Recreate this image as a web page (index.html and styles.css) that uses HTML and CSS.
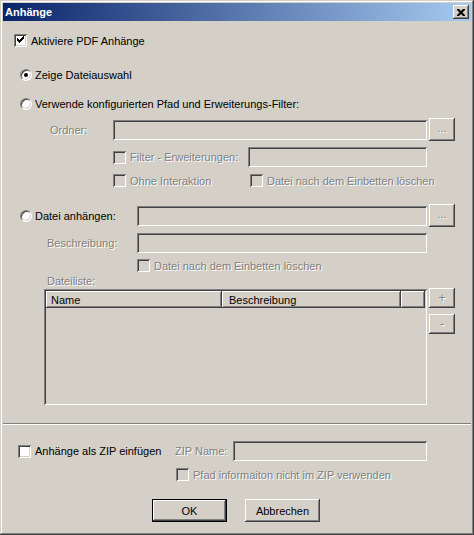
FILE: index.html
```html
<!DOCTYPE html>
<html lang="de">
<head>
  <meta charset="UTF-8">
  <title>Anhänge</title>
  <link rel="stylesheet" href="styles.css">
</head>
<body>
  <div class="window">
    <div class="titlebar">
      <span class="title">Anhänge</span>
      <span class="close">
        <svg width="8" height="7" viewBox="0 0 8 7"><path d="M0 0h2l2 2 2-2h2v1l-2.5 2.5L8 6v1H6L4 5 2 7H0V6l2.5-2.5L0 1z" fill="#000"/></svg>
      </span>
    </div>

    <div class="content">
      <div class="row r-enable">
        <span class="check on"></span>
        <span class="text">Aktiviere PDF Anhänge</span>
      </div>

      <div class="row r-radio1">
        <span class="radio on"></span>
        <span class="text">Zeige Dateiauswahl</span>
      </div>

      <div class="row r-radio2">
        <span class="radio"></span>
        <span class="text">Verwende konfigurierten Pfad und Erweiterungs-Filter:</span>
      </div>

      <div class="row r-folder">
        <span class="label off w-folder">Ordner:</span>
        <span class="field w-314"></span>
        <span class="btn small">...</span>
      </div>

      <div class="row r-filter">
        <span class="check dis"></span>
        <span class="text off w-filter">Filter - Erweiterungen:</span>
        <span class="field w-179"></span>
      </div>

      <div class="row r-noint">
        <span class="check dis"></span>
        <span class="text off w-noint">Ohne Interaktion</span>
        <span class="check dis"></span>
        <span class="text off">Datei nach dem Einbetten löschen</span>
      </div>

      <div class="row r-attach">
        <span class="radio"></span>
        <span class="text w-attach">Datei anhängen:</span>
        <span class="field w-290"></span>
        <span class="btn small">...</span>
      </div>

      <div class="row r-desc">
        <span class="label off w-desc">Beschreibung:</span>
        <span class="field w-290"></span>
      </div>

      <div class="row r-delete">
        <span class="check dis"></span>
        <span class="text off">Datei nach dem Einbetten löschen</span>
      </div>

      <div class="row r-listlabel">
        <span class="label off">Dateiliste:</span>
      </div>

      <div class="row r-list">
        <div class="listbox">
          <div class="header">
            <span class="col c-name">Name</span>
            <span class="col c-desc">Beschreibung</span>
            <span class="col c-rest"></span>
          </div>
        </div>
        <div class="side">
          <span class="btn side-btn">+</span>
          <span class="btn side-btn">-</span>
        </div>
      </div>

      <div class="separator"></div>

      <div class="row r-zip">
        <span class="check"></span>
        <span class="text w-zip">Anhänge als ZIP einfügen</span>
        <span class="label off w-zipname">ZIP Name:</span>
        <span class="field w-194"></span>
      </div>

      <div class="row r-path">
        <span class="check dis"></span>
        <span class="text off">Pfad informaiton nicht im ZIP verwenden</span>
      </div>

      <div class="row r-buttons">
        <span class="btn push default">OK</span>
        <span class="btn push">Abbrechen</span>
      </div>
    </div>
  </div>
</body>
</html>
```

FILE: styles.css
```css
body {
  margin: 0;
  background: #d4d0c8;
  font-family: "Liberation Sans", Arial, sans-serif;
  font-size: 11px;
  color: #000;
}
.window {
  width: 474px;
  height: 535px;
  box-sizing: border-box;
  padding: 3px;
  background: #d4d0c8;
  box-shadow: inset -1px -1px #404040, inset 1px 1px #d4d0c8,
              inset -2px -2px #808080, inset 2px 2px #fff;
  display: flex;
  flex-direction: column;
}
.titlebar {
  height: 18px;
  flex: none;
  display: flex;
  align-items: center;
  justify-content: space-between;
  padding: 0 2px 0 2px;
  background: linear-gradient(to right, #0a246a, #a6caf0);
}
.title {
  color: #fff;
  font-weight: bold;
  font-size: 11px;
}
.close {
  width: 16px;
  height: 14px;
  box-sizing: border-box;
  background: #d4d0c8;
  display: flex;
  align-items: center;
  justify-content: center;
  box-shadow: inset -1px -1px #404040, inset 1px 1px #fff,
              inset -2px -2px #808080;
}
.close svg {
  display: block;
}

/* rows */
.row {
  display: flex;
  align-items: center;
  flex: none;
}
.r-enable { margin: 11px 0 0 11px; height: 17px; }
.r-radio1 { margin: 17px 0 0 17px; height: 17px; }
.r-radio2 { margin: 12px 0 0 17px; height: 17px; }
.r-folder { margin: 6px 0 0 47px; height: 23px; }
.r-filter { margin: 6px 0 0 110px; height: 20px; }
.r-noint { margin: 5px 0 0 110px; height: 17px; }
.r-attach { margin: 15px 0 0 17px; height: 23px; }
.r-desc { margin: 6px 0 0 44px; height: 20px; }
.r-delete { margin: 4px 0 0 134px; height: 17px; }
.r-listlabel { margin: 0 0 0 44px; height: 14px; }
.r-list { margin: 0 0 0 41px; align-items: flex-start; }
.r-zip { margin: 16px 0 0 15px; height: 20px; }
.r-path { margin: 5px 0 0 173px; height: 17px; }
.r-buttons { margin: 16px 0 0 149px; height: 23px; gap: 18px; }

.text { margin-left: 4px; }
.label.w-folder { width: 63px; }
.text.w-filter { width: 118px; }
.text.w-noint { width: 120px; }
.text.w-attach { width: 102px; }
.label.w-desc { width: 90px; }
.text.w-zip { width: 140px; }
.label.w-zipname { width: 58px; }

.off {
  color: #808080;
  text-shadow: 1px 1px #fff;
}

/* checkbox and radio */
.check {
  width: 13px;
  height: 13px;
  flex: none;
  box-sizing: border-box;
  background: #fff;
  box-shadow: inset 1px 1px #808080, inset -1px -1px #fff,
              inset 2px 2px #404040, inset -2px -2px #d4d0c8;
  position: relative;
}
.check.dis { background: #d4d0c8; }
.check.on::after {
  content: "";
  position: absolute;
  left: 3px;
  top: 2px;
  width: 7px;
  height: 7px;
  background: url("data:image/svg+xml,%3Csvg xmlns='http://www.w3.org/2000/svg' width='7' height='7'%3E%3Cpath d='M0 2h1v1h1v1h1V3h1V2h1V1h1V0h1v3H6v1H5v1H4v1H3v1H2V6H1V5H0z' fill='%23000'/%3E%3C/svg%3E");
}
.radio {
  width: 12px;
  height: 12px;
  flex: none;
  box-sizing: border-box;
  border-radius: 50%;
  background: #fff;
  border: 1px solid;
  border-color: #808080 #fff #fff #808080;
  box-shadow: inset 1px 1px #404040, inset -1px -1px #d4d0c8;
  position: relative;
}
.radio + .text { margin-left: 3px; }
.radio.on::after {
  content: "";
  position: absolute;
  left: 3px;
  top: 3px;
  width: 4px;
  height: 4px;
  border-radius: 50%;
  background: #000;
}

/* text fields */
.field {
  height: 20px;
  flex: none;
  box-sizing: border-box;
  background: #d4d0c8;
  box-shadow: inset 1px 1px #808080, inset -1px -1px #fff,
              inset 2px 2px #404040, inset -2px -2px #d4d0c8;
}
.w-314 { width: 314px; }
.w-290 { width: 290px; }
.w-179 { width: 179px; }
.w-194 { width: 194px; }

/* buttons */
.btn {
  flex: none;
  box-sizing: border-box;
  display: flex;
  align-items: center;
  justify-content: center;
  background: #d4d0c8;
  box-shadow: inset -1px -1px #404040, inset 1px 1px #fff,
              inset -2px -2px #808080;
}
.btn.small {
  width: 26px;
  height: 23px;
  margin-left: 2px;
  color: #808080;
  text-shadow: 1px 1px #fff;
  padding-bottom: 3px;
}
.btn.push {
  width: 75px;
  height: 23px;
}
.btn.default {
  box-shadow: inset 0 0 0 1px #000, inset -2px -2px #404040,
              inset 2px 2px #fff, inset -3px -3px #808080;
}

/* list */
.listbox {
  width: 383px;
  height: 116px;
  margin-top: 1px;
  box-sizing: border-box;
  padding: 2px;
  background: #d4d0c8;
  box-shadow: inset 1px 1px #808080, inset -1px -1px #fff,
              inset 2px 2px #404040, inset -2px -2px #d4d0c8;
}
.header {
  display: flex;
  height: 17px;
}
.col {
  box-sizing: border-box;
  height: 17px;
  display: flex;
  align-items: center;
  padding-left: 5px;
  background: #d4d0c8;
  box-shadow: inset -1px -1px #404040, inset 1px 1px #fff,
              inset -2px -2px #808080;
}
.c-name { width: 176px; }
.c-desc { width: 179px; padding-left: 7px; }
.c-rest { width: 24px; }
.side {
  display: flex;
  flex-direction: column;
  gap: 6px;
  margin-left: 2px;
}
.btn.side-btn {
  width: 26px;
  height: 20px;
  color: #808080;
  text-shadow: 1px 1px #fff;
  font-size: 12px;
}

.separator {
  flex: none;
  margin-top: 18px;
  height: 2px;
  border-top: 1px solid #808080;
  border-bottom: 1px solid #fff;
  box-sizing: border-box;
}
```
